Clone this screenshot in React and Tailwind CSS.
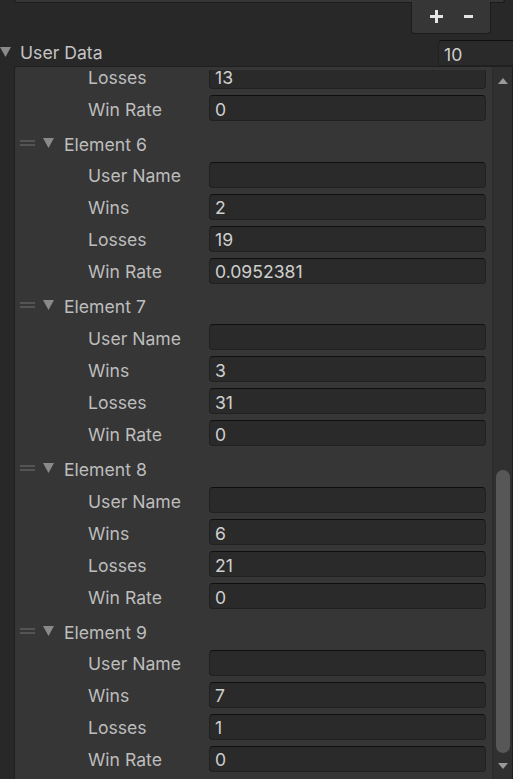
import React from 'react'

const elements = [
  { n: 6, wins: '2', losses: '19', rate: '0.0952381' },
  { n: 7, wins: '3', losses: '31', rate: '0' },
  { n: 8, wins: '6', losses: '21', rate: '0' },
  { n: 9, wins: '7', losses: '1', rate: '0' },
]

function Field({ label, value }) {
  return (
    <div className="flex items-center h-[32px]">
      <div className="w-[194px] pl-[73px] pt-[3px] text-[17.6px] text-[#bdbdbd] leading-none">{label}</div>
      <div className="w-[277px] h-[26px] rounded-[4px] bg-[#2a2a2a] border border-[#212121] border-t-[#0f0f0f] flex items-center pl-[5px] pt-[3px] text-[17.6px] text-[#cfcfcf] leading-none">
        {value}
      </div>
    </div>
  )
}

function Triangle({ className }) {
  return (
    <svg width="11" height="10" viewBox="0 0 11 10" className={className}>
      <path d="M0 0 H11 L5.5 10 Z" fill="#8a8a8a" />
    </svg>
  )
}

function ElementHeader({ n }) {
  return (
    <div className="flex items-center h-[34.67px] pt-[3px]">
      <div className="ml-[5px] w-[15px] flex flex-col gap-[2px]">
        <div className="h-[2px] bg-[#545454]" />
        <div className="h-[2px] bg-[#545454]" />
      </div>
      <Triangle className="ml-[8px]" />
      <span className="ml-[10px] pt-[3px] text-[17.6px] text-[#bdbdbd] leading-none">Element {n}</span>
    </div>
  )
}

export default function App() {
  return (
    <div className="w-[513px] h-[779px] bg-[#282828] overflow-hidden font-['Inter',sans-serif]">
      <div className="ml-[14px] w-[491px] h-[3px] bg-[#363636] border-x border-b border-[#1c1c1c] rounded-b-[3px]" />
      <div className="flex justify-end pr-[22px]">
        <div className="w-[80px] h-[32px] -mt-[1px] bg-[#363636] border border-t-0 border-[#1c1c1c] rounded-b-[4px] flex items-center justify-center gap-[21px] pb-[2px]">
          <svg width="13" height="13" viewBox="0 0 13 13">
            <path d="M6.5 0 V13 M0 6.5 H13" stroke="#e4e4e4" strokeWidth="3" />
          </svg>
          <svg width="9" height="3" viewBox="0 0 9 3">
            <rect width="9" height="3" fill="#e4e4e4" />
          </svg>
        </div>
      </div>
      <div className="flex items-center h-[32px] pt-[3px]">
        <Triangle className="ml-[0px]" />
        <span className="ml-[9px] pt-[3px] text-[17.6px] text-[#c4c4c4] leading-none">User Data</span>
        <div className="ml-auto w-[75px] h-[26px] mt-[3px] rounded-l-[4px] bg-[#2a2a2a] border border-r-0 border-[#212121] border-t-[#0f0f0f] flex items-center pl-[5px] pt-[3px] text-[17.6px] text-[#cfcfcf] leading-none">
          10
        </div>
      </div>
      <div className="ml-[14px] w-[499px] h-[713px] bg-[#363636] border-l border-t border-r border-[#1f1f1f] rounded-tl-[3px] flex">
        <div className="w-[477px] pt-[3px]">
          <div className="h-full overflow-hidden">
            <div className="-mt-[10px]">
              <Field label="Losses" value="13" />
              <Field label="Win Rate" value="0" />
              {elements.map((e) => (
                <div key={e.n}>
                  <ElementHeader n={e.n} />
                  <Field label="User Name" value="" />
                  <Field label="Wins" value={e.wins} />
                  <Field label="Losses" value={e.losses} />
                  <Field label="Win Rate" value={e.rate} />
                </div>
              ))}
            </div>
          </div>
        </div>
        <div className="w-[20px] bg-[#303030] border-l border-[#2b2b2b] flex flex-col items-center">
          <svg width="10" height="6" viewBox="0 0 10 6" className="mt-[11px]">
            <path d="M0 6 L5 0 L10 6 Z" fill="#9a9a9a" />
          </svg>
          <div className="h-[386px]" />
          <div className="w-[14px] h-[283px] rounded-full bg-[#575757] ml-[1px]" />
          <svg width="10" height="6" viewBox="0 0 10 6" className="mt-[10px]">
            <path d="M0 0 L10 0 L5 6 Z" fill="#9a9a9a" />
          </svg>
        </div>
      </div>
    </div>
  )
}
